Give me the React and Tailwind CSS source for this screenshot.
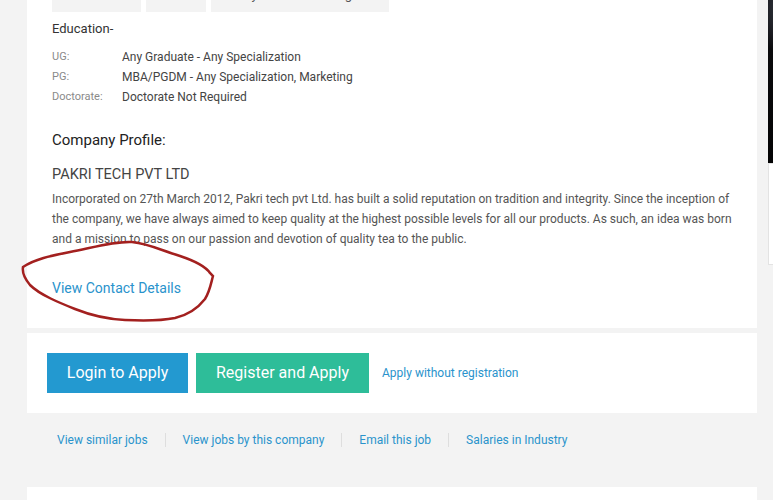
import React from "react"

const education = [
    { label: "UG:", value: "Any Graduate - Any Specialization" },
    { label: "PG:", value: "MBA/PGDM - Any Specialization, Marketing" },
    { label: "Doctorate:", value: "Doctorate Not Required" },
]

const links = ["View similar jobs", "View jobs by this company", "Email this job", "Salaries in Industry"]

function Scribble() {
    return (
        <svg className="absolute left-[-36px] top-[-45px] pointer-events-none" width="200" height="92" viewBox="0 0 200 92">
            <path
                d="M3 24 C 15 16, 30 13, 50 9 C 75 4, 95 -2, 112 -1 C 130 1, 140 7, 160 13 C 175 18, 186 24, 190 30 L 193 33 C 191 40, 190 48, 185 56 C 178 65, 168 72, 155 75 C 140 78, 125 78, 105 77 C 85 76, 70 72, 55 66 C 40 60, 20 52, 10 42 C 4 35, 2 30, 3 24 Z"
                fill="none"
                stroke="#a3201f"
                strokeWidth="2.5"
                strokeLinecap="round"
                transform="translate(4 12)"
            />
        </svg>
    )
}

export default function App() {
    return (
        <div className="relative h-[500px] overflow-hidden bg-[#f3f3f3] font-['Roboto',sans-serif]">
            <div className="flex items-start">
                <div className="ml-[27px] w-[730px] shrink-0 -mt-[18px]">
                    <div className="bg-white px-[25px] pb-[28px]">
                        <div className="flex gap-[5px]">
                            <div className="h-[30px] w-[89px] bg-[#f3f3f3]" />
                            <div className="h-[30px] w-[60px] bg-[#f3f3f3]" />
                            <div className="flex h-[30px] w-[178px] items-end justify-center bg-[#f3f3f3] pb-[9px] text-[13px] leading-4 text-[#555]">
                                Key Account Manager
                            </div>
                        </div>
                        <p className="mt-[9px] text-[13px] leading-4 text-[#333]">Education-</p>
                        <div className="mt-[10px]">
                            {education.map((row) => (
                                <div key={row.label} className="flex h-5 items-center">
                                    <span className="w-[70px] text-[11px] text-[#8a8a8a]">{row.label}</span>
                                    <span className="text-[12px] text-[#444]">{row.value}</span>
                                </div>
                            ))}
                        </div>
                        <h3 className="mt-[23px] text-[15px] leading-5 text-[#222]">Company Profile:</h3>
                        <h4 className="mt-[15px] text-[14.5px] leading-5 text-[#444]">PAKRI TECH PVT LTD</h4>
                        <p className="mt-[4px] text-[12px] leading-5 text-[#555]">
                            Incorporated on 27th March 2012, Pakri tech pvt Ltd. has built a solid reputation on tradition and integrity. Since the inception of the company, we have always aimed to keep quality at the highest possible levels for all our products. As such, an idea was born and a mission to pass on our passion and devotion of quality tea to the public.
                        </p>
                        <div className="relative mt-[27px]">
                            <a className="text-[14px] leading-5 text-[#2a93cc]">View Contact Details</a>
                            <Scribble />
                        </div>
                    </div>
                    <div className="mt-[5px] flex items-center bg-white px-[20px] py-[20px]">
                        <button className="h-10 w-[141px] bg-[#2399d0] text-[16px] text-white">Login to Apply</button>
                        <button className="ml-[8px] h-10 w-[173px] bg-[#2ebd99] text-[16px] text-white">Register and Apply</button>
                        <a className="ml-[13px] text-[12px] text-[#2a93cc]">Apply without registration</a>
                    </div>
                    <div className="ml-[30px] mt-[20px] flex h-[14px] items-center gap-[17px] text-[12px] text-[#2a93cc]">
                        {links.map((l, i) => (
                            <React.Fragment key={l}>
                                {i > 0 && <span className="h-[14px] w-px bg-[#dedede]" />}
                                <a>{l}</a>
                            </React.Fragment>
                        ))}
                    </div>
                    <div className="mt-[40px] h-[60px] bg-white" />
                </div>
                <div className="ml-[11px] w-[200px] shrink-0">
                    <div className="h-[163px] bg-[radial-gradient(circle_at_20%_5%,#5a6070,#0a0a0c_25%,#000)]" />
                    <div className="h-[102px] border border-[#e3e3e3] bg-white" />
                </div>
            </div>
        </div>
    )
}
